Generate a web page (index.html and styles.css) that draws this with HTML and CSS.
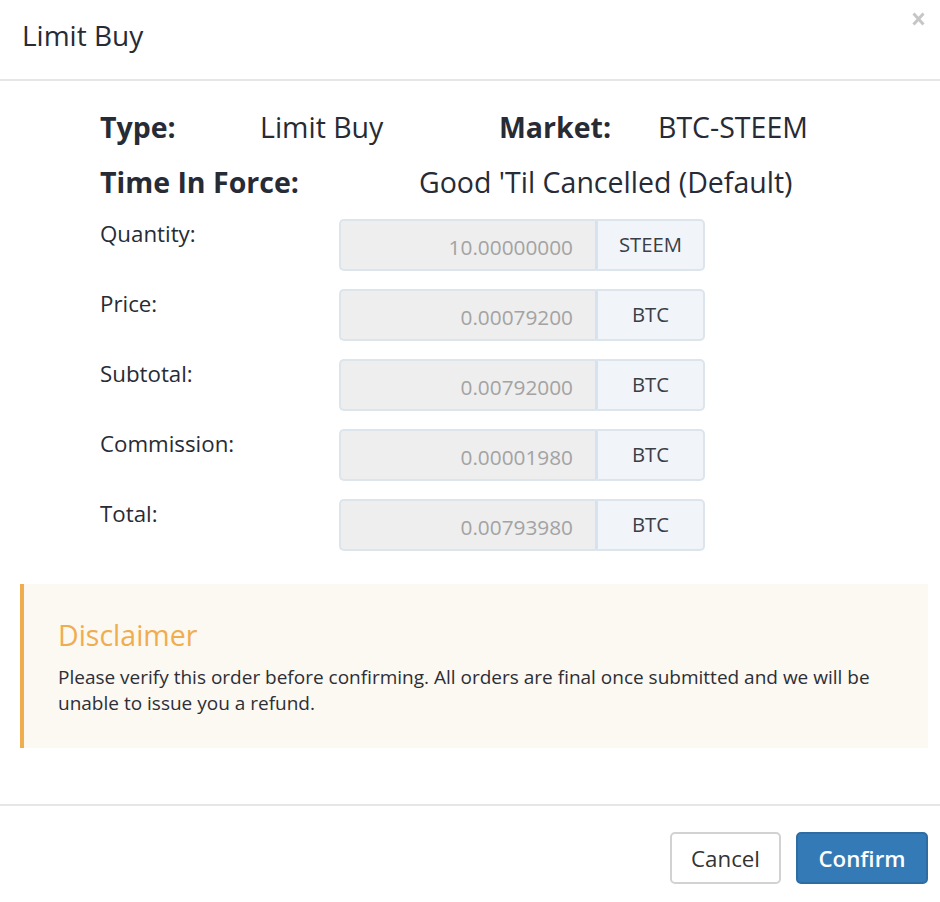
FILE: index.html
```
<!DOCTYPE html>
<html>
<head>
<meta charset="utf-8">
<link rel="stylesheet" href="styles.css">
</head>
<body>
<div class="modal">
  <div class="modal-header">
    <h4 class="modal-title">Limit Buy</h4>
    <span class="close" aria-label="Close"><svg width="13" height="14" viewBox="0 0 13 14"><path d="M1.5 1.5 L11.5 12.5 M11.5 1.5 L1.5 12.5" stroke="#c6c6c6" stroke-width="3" stroke-linecap="butt"/></svg></span>
  </div>
  <div class="modal-body">
    <div class="summary">
      <div class="sum-row">
        <span class="k k1">Type:</span><span class="v v1">Limit Buy</span>
        <span class="k k2">Market:</span><span class="v">BTC-STEEM</span>
      </div>
      <div class="sum-row">
        <span class="k k-tif">Time In Force:</span><span class="v">Good 'Til Cancelled (Default)</span>
      </div>
    </div>
    <div class="fields">
      <div class="field"><label class="lbl">Quantity:</label><div class="group"><div class="input">10.00000000</div><div class="addon">STEEM</div></div></div>
      <div class="field"><label class="lbl">Price:</label><div class="group"><div class="input">0.00079200</div><div class="addon">BTC</div></div></div>
      <div class="field"><label class="lbl">Subtotal:</label><div class="group"><div class="input">0.00792000</div><div class="addon">BTC</div></div></div>
      <div class="field"><label class="lbl">Commission:</label><div class="group"><div class="input">0.00001980</div><div class="addon">BTC</div></div></div>
      <div class="field"><label class="lbl">Total:</label><div class="group"><div class="input">0.00793980</div><div class="addon">BTC</div></div></div>
    </div>
    <div class="disclaimer">
      <h4 class="disc-title">Disclaimer</h4>
      <p class="disc-text">Please verify this order before confirming. All orders are final once submitted and we will be unable to issue you a refund.</p>
    </div>
  </div>
  <div class="modal-footer">
    <button class="btn btn-default">Cancel</button>
    <button class="btn btn-primary">Confirm</button>
  </div>
</div>
</body>
</html>
```
FILE: styles.css
```
* { box-sizing: border-box; }
html, body { margin: 0; padding: 0; background: #fff; }
body {
  font-family: "Open Sans", "Noto Sans", sans-serif;
  color: #272b35;
  width: 940px;
  height: 902px;
  overflow: hidden;
}
.modal { width: 940px; }
.modal-header {
  height: 81px;
  border-bottom: 2px solid #e6e6e6;
  display: flex;
  align-items: flex-start;
  justify-content: space-between;
  padding: 0 15px 0 22px;
}
.modal-title {
  margin: 15px 0 0;
  font-size: 28px;
  font-weight: 400;
  line-height: 40px;
  color: #272b35;
}
.close {
  display: block;
  width: 13px;
  height: 14px;
  margin-top: 12px;
}
.close svg { display: block; }
.modal-body { padding: 18px 12px 0 20px; }
.summary { padding-left: 80px; }
.sum-row {
  display: flex;
  align-items: center;
  height: 55px;
  font-size: 28.5px;
}
.k { font-weight: 700; }
.k1 { width: 160px; }
.v1 { width: 239px; }
.k2 { width: 159px; }
.k-tif { width: 319px; }
.fields {
  padding-left: 80px;
  margin-top: 10px;
  display: flex;
  flex-direction: column;
  gap: 18px;
}
.field { display: flex; align-items: flex-start; }
.lbl {
  width: 239px;
  font-size: 22.3px;
  line-height: 30px;
}
.group { display: flex; height: 52px; }
.input {
  width: 256px;
  height: 52px;
  background: #eeeeee;
  border: 2px solid #dde5ec;
  border-right: none;
  border-radius: 5px 0 0 5px;
  text-align: right;
  padding-right: 22px;
  font-size: 20.8px;
  line-height: 52px;
  color: #a3a3a3;
}
.addon {
  width: 110px;
  height: 52px;
  background: #f1f5f9;
  border: 2px solid #dde5ec;
  border-left: 3px solid #d6e3ee;
  border-radius: 0 5px 5px 0;
  text-align: center;
  font-size: 20.3px;
  line-height: 46px;
  color: #3a3e46;
}
.disclaimer {
  margin-top: 33px;
  width: 908px;
  height: 164px;
  background: #fcf8f2;
  border-left: 4px solid #f0ad4e;
  padding: 32px 34px 0 34px;
}
.disc-title {
  margin: 0;
  font-size: 28.5px;
  font-weight: 400;
  line-height: 38px;
  color: #f0ad4e;
}
.disc-text {
  margin: 10px 0 0;
  font-size: 19px;
  line-height: 26px;
  color: #2c2f36;
}
.modal-footer {
  margin-top: 56px;
  border-top: 2px solid #e6e6e6;
  display: flex;
  justify-content: flex-end;
  gap: 15px;
  padding: 26px 12px 0 0;
}
.btn {
  height: 52px;
  font-family: "Open Sans", "Noto Sans", sans-serif;
  font-size: 22.3px;
  border-radius: 5px;
  padding: 0;
  cursor: pointer;
}
.btn-default {
  width: 111px;
  background: #fff;
  border: 2px solid #d2d2d2;
  color: #333;
}
.btn-primary {
  width: 132px;
  background: #337ab7;
  border: 2px solid #2e6da4;
  color: #fff;
  font-weight: 600;
}
```
